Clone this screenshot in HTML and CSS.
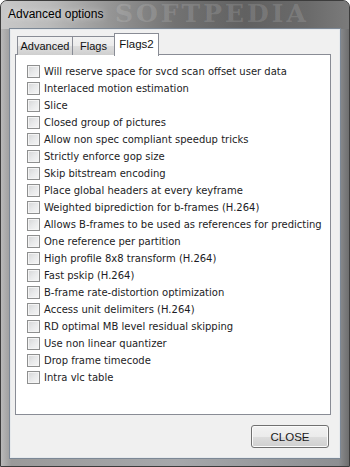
FILE: index.html
```html
<!DOCTYPE html>
<html>
<head>
<meta charset="utf-8">
<link rel="stylesheet" href="styles.css">
</head>
<body>
<div class="window">
  <div class="titlebar">
    <span class="title">Advanced options</span>
    <span class="watermark">SOFTPEDIA</span>
  </div>
  <div class="client">
    <div class="tabs">
      <div class="tab">Advanced</div>
      <div class="tab">Flags</div>
      <div class="tab active">Flags2</div>
    </div>
    <div class="panel">
      <ul class="list">
        <li><span class="cb"></span><span class="lbl">Will reserve space for svcd scan offset user data</span></li>
        <li><span class="cb"></span><span class="lbl">Interlaced motion estimation</span></li>
        <li><span class="cb"></span><span class="lbl">Slice</span></li>
        <li><span class="cb"></span><span class="lbl">Closed group of pictures</span></li>
        <li><span class="cb"></span><span class="lbl">Allow non spec compliant speedup tricks</span></li>
        <li><span class="cb"></span><span class="lbl">Strictly enforce gop size</span></li>
        <li><span class="cb"></span><span class="lbl">Skip bitstream encoding</span></li>
        <li><span class="cb"></span><span class="lbl">Place global headers at every keyframe</span></li>
        <li><span class="cb"></span><span class="lbl">Weighted biprediction for b-frames (H.264)</span></li>
        <li><span class="cb"></span><span class="lbl">Allows B-frames to be used as references for predicting</span></li>
        <li><span class="cb"></span><span class="lbl">One reference per partition</span></li>
        <li><span class="cb"></span><span class="lbl">High profile 8x8 transform (H.264)</span></li>
        <li><span class="cb"></span><span class="lbl">Fast pskip (H.264)</span></li>
        <li><span class="cb"></span><span class="lbl">B-frame rate-distortion optimization</span></li>
        <li><span class="cb"></span><span class="lbl">Access unit delimiters (H.264)</span></li>
        <li><span class="cb"></span><span class="lbl">RD optimal MB level residual skipping</span></li>
        <li><span class="cb"></span><span class="lbl">Use non linear quantizer</span></li>
        <li><span class="cb"></span><span class="lbl">Drop frame timecode</span></li>
        <li><span class="cb"></span><span class="lbl">Intra vlc table</span></li>
      </ul>
    </div>
    <div class="footer">
      <button class="btn">CLOSE</button>
    </div>
  </div>
</div>
</body>
</html>
```

FILE: styles.css
```css
* { box-sizing: border-box; }
html, body { margin: 0; padding: 0; }
body { width: 350px; height: 467px; overflow: hidden; background: #ffffff; }

.window {
  width: 350px;
  height: 467px;
  display: flex;
  flex-direction: column;
  padding: 0 8px 7px 8px;
  border-radius: 7px 7px 0 0;
  border: 1px solid #3c3c3c;
  background:
    linear-gradient(90deg, #b9b9b9 0%, #9a9a9a 3%, #a6a8ab 50%, #8d8f92 97%, #6e6e6e 100%);
  position: relative;
  overflow: hidden;
}
.window::before {
  content: "";
  position: absolute;
  left: 0; top: 0; right: 0; height: 28px;
  background: linear-gradient(90deg, #c8c8c8 0%, #bababa 14%, #949494 32%, #727272 50%, #616161 70%, #6a6a6a 88%, #7b7b7b 100%);
}
.titlebar {
  position: relative;
  height: 27px;
  flex: none;
  display: flex;
  align-items: center;
  padding-bottom: 2px;
}
.title {
  position: relative;
  font-family: "Liberation Sans", Arial, sans-serif;
  font-size: 12px;
  color: #000;
  margin-left: -1px;
  text-shadow: 0 0 6px rgba(255,255,255,0.8);
}
.watermark {
  position: absolute;
  left: 106px;
  top: -2px;
  font-family: "DejaVu Serif", serif;
  font-weight: bold;
  font-size: 25px;
  letter-spacing: 3px;
  color: rgba(255,255,255,0.14);
}

.client {
  position: relative;
  flex: 1;
  background: #f0f0f0;
  border: 1px solid #7c8896;
  box-shadow: inset 0 0 0 1px #e6e9ec;
  display: flex;
  flex-direction: column;
  padding: 4px 9px 0 5px;
}

.tabs {
  display: flex;
  align-items: flex-end;
  height: 22px;
  padding-left: 2px;
  position: relative;
  z-index: 2;
  margin-bottom: -1px;
}
.tab {
  height: 19px;
  padding: 0;
  text-align: center;
  font-family: "Liberation Sans", Arial, sans-serif;
  font-size: 11px;
  color: #111;
  line-height: 18px;
  border: 1px solid #898c95;
  border-bottom: none;
  background: linear-gradient(#f2f2f2 0%, #ebebeb 50%, #dddddd 51%, #cfcfcf 100%);
  margin-right: -1px;
  white-space: nowrap;
}
.tab:nth-child(1) { width: 56px; }
.tab:nth-child(2) { width: 43px; }
.tab.active {
  height: 23px;
  width: 45px;
  background: #ffffff;
  line-height: 20px;
  font-size: 11.5px;
  position: relative;
  top: 1px;
}

.panel {
  height: 361px;
  background: #ffffff;
  border: 1px solid #898c95;
  overflow: hidden;
  position: relative;
  z-index: 1;
}
.list {
  list-style: none;
  margin: 0;
  padding: 8px 0 0 11px;
}
.list li {
  height: 17px;
  display: flex;
  align-items: center;
  white-space: nowrap;
}
.cb {
  flex: none;
  width: 13px;
  height: 13px;
  border: 1px solid #8e8f8f;
  background: linear-gradient(135deg, #d4d5d6 0%, #e8e9ea 50%, #f6f6f6 100%);
  box-shadow: inset 0 0 0 1px #f4f4f4;
  margin-right: 4px;
}
.lbl {
  font-family: "DejaVu Sans", Verdana, sans-serif;
  font-size: 10px;
  color: #1c1c24;
}

.footer {
  display: flex;
  justify-content: flex-end;
  padding-top: 10px;
  padding-right: 2px;
}
.btn {
  width: 78px;
  height: 23px;
  border: 1px solid #707070;
  border-radius: 3px;
  background: linear-gradient(#f2f2f2 0%, #ebebeb 50%, #dddddd 51%, #cfcfcf 100%);
  box-shadow: inset 0 0 0 1px #fbfbfb;
  font-family: "Liberation Sans", Arial, sans-serif;
  font-size: 11.5px;
  color: #1a1a1a;
  padding: 0;
}
```
